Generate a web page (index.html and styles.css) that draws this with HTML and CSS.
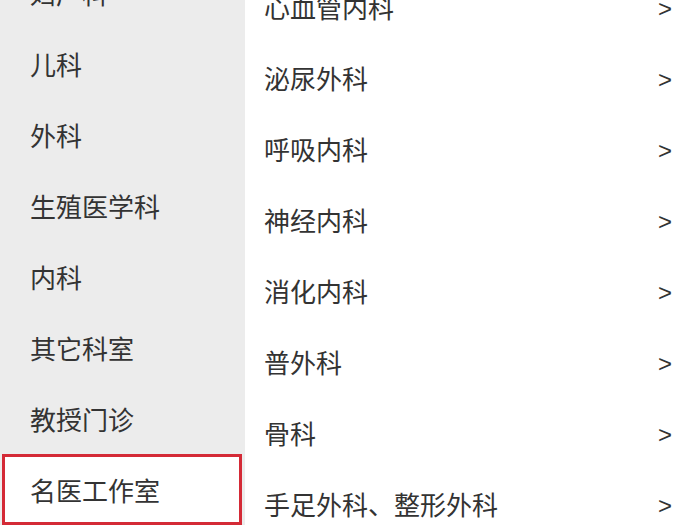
FILE: index.html
```html
<!DOCTYPE html>
<html lang="zh-CN">
<head>
<meta charset="utf-8">
<link rel="stylesheet" href="styles.css">
</head>
<body>
<div class="page">
  <nav class="side">
    <ul class="side-list">
      <li class="side-item">妇产科</li>
      <li class="side-item">儿科</li>
      <li class="side-item">外科</li>
      <li class="side-item">生殖医学科</li>
      <li class="side-item">内科</li>
      <li class="side-item">其它科室</li>
      <li class="side-item">教授门诊</li>
      <li class="side-item active">名医工作室</li>
    </ul>
  </nav>
  <main class="main">
    <ul class="dept-list">
      <li class="dept-item"><span class="dept-name">心血管内科</span><span class="arrow">&gt;</span></li>
      <li class="dept-item"><span class="dept-name">泌尿外科</span><span class="arrow">&gt;</span></li>
      <li class="dept-item"><span class="dept-name">呼吸内科</span><span class="arrow">&gt;</span></li>
      <li class="dept-item"><span class="dept-name">神经内科</span><span class="arrow">&gt;</span></li>
      <li class="dept-item"><span class="dept-name">消化内科</span><span class="arrow">&gt;</span></li>
      <li class="dept-item"><span class="dept-name">普外科</span><span class="arrow">&gt;</span></li>
      <li class="dept-item"><span class="dept-name">骨科</span><span class="arrow">&gt;</span></li>
      <li class="dept-item"><span class="dept-name">手足外科、整形外科</span><span class="arrow">&gt;</span></li>
    </ul>
  </main>
</div>
</body>
</html>
```

FILE: styles.css
```css
* { box-sizing: border-box; }
html, body {
  margin: 0;
  padding: 0;
  background: #ffffff;
}
body {
  font-family: "Noto Sans CJK SC", "Noto Sans", sans-serif;
  color: #333333;
}
.page {
  display: flex;
  width: 700px;
  height: 525px;
  overflow: hidden;
}
.side {
  width: 245px;
  flex: 0 0 245px;
  background: #ececec;
}
.side-list, .dept-list {
  list-style: none;
  margin: 0;
  padding: 0;
}
.side-list {
  margin-top: -43px;
}
.side-item {
  height: 71px;
  display: flex;
  align-items: center;
  padding-left: 30px;
  font-size: 26px;
  line-height: 1;
  color: #333333;
}
.side-item.active {
  background: #ffffff;
  border: 3px solid #d42a36;
  margin: 0 3px 0 2px;
  padding-left: 25px;
}
.main {
  flex: 1;
  background: #ffffff;
}
.dept-list {
  margin-top: -29px;
  padding-left: 19px;
  padding-right: 28px;
}
.dept-item {
  height: 71px;
  display: flex;
  align-items: center;
  justify-content: space-between;
  font-size: 26px;
  line-height: 1;
  color: #333333;
}
.arrow {
  font-family: "Liberation Sans", "DejaVu Sans", sans-serif;
  font-size: 24px;
  padding-top: 5px;
  color: #333333;
}
```
